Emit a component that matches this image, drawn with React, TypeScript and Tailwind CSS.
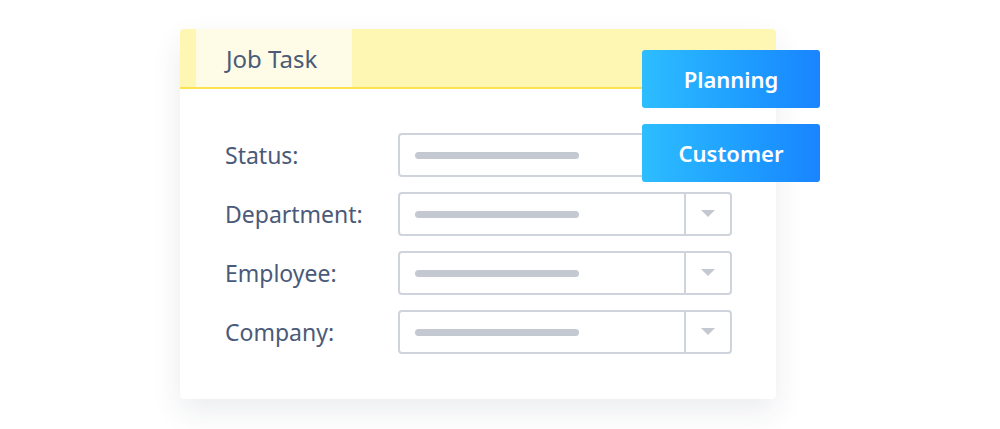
const fields = ["Status:", "Department:", "Employee:", "Company:"];

function SelectBox() {
  return (
    <div className="flex h-[44px] w-[334px] rounded-[4px] border-2 border-[#cfd3db] bg-white">
      <div className="flex flex-1 items-center pl-[15px]">
        <div className="h-[7px] w-[164px] rounded-full bg-[#c3c8d1]" />
      </div>
      <div className="flex w-[46px] items-center justify-center border-l-2 border-[#cfd3db]">
        <svg width="14" height="8" viewBox="0 0 14 8">
          <path d="M0 0 L14 0 L7 7 Z" fill="#c3c8d1" />
        </svg>
      </div>
    </div>
  );
}

export default function App() {
  return (
    <div
      className="relative h-[429px] w-[1000px] overflow-hidden bg-white"
      style={{ fontFamily: '"Source Sans Pro", "Noto Sans", Lato, sans-serif' }}
    >
      <div className="ml-[180px] mt-[29px] h-[370px] w-[596px] rounded-[4px] bg-white shadow-[0_12px_30px_rgba(30,45,80,0.09)]">
        <div className="flex h-[60px] rounded-t-[4px] border-b-2 border-[#fde24f] bg-[#fef7b4] pl-[16px]">
          <div className="flex w-[156px] items-center bg-[#fefce6] pl-[30px] pt-[2px] text-[24px] text-[#4a5a78]">
            Job Task
          </div>
        </div>
        <div className="flex flex-col gap-[15px] pl-[45px] pt-[44px]">
          {fields.map((f) => (
            <div key={f} className="flex items-center">
              <div className="w-[173px] text-[23px] text-[#4a5a78]">{f}</div>
              <SelectBox />
            </div>
          ))}
        </div>
      </div>

      <div className="absolute left-[642px] top-[50px] flex flex-col gap-[16px]">
        <div className="flex h-[58px] w-[178px] items-center justify-center rounded-[3px] bg-gradient-to-r from-[#2ebdff] to-[#1a84ff] text-[22px] font-semibold text-white">
          Planning
        </div>
        <div className="flex h-[58px] w-[178px] items-center justify-center rounded-[3px] bg-gradient-to-r from-[#2ebdff] to-[#1a84ff] text-[22px] font-semibold text-white">
          Customer
        </div>
      </div>
    </div>
  );
}
